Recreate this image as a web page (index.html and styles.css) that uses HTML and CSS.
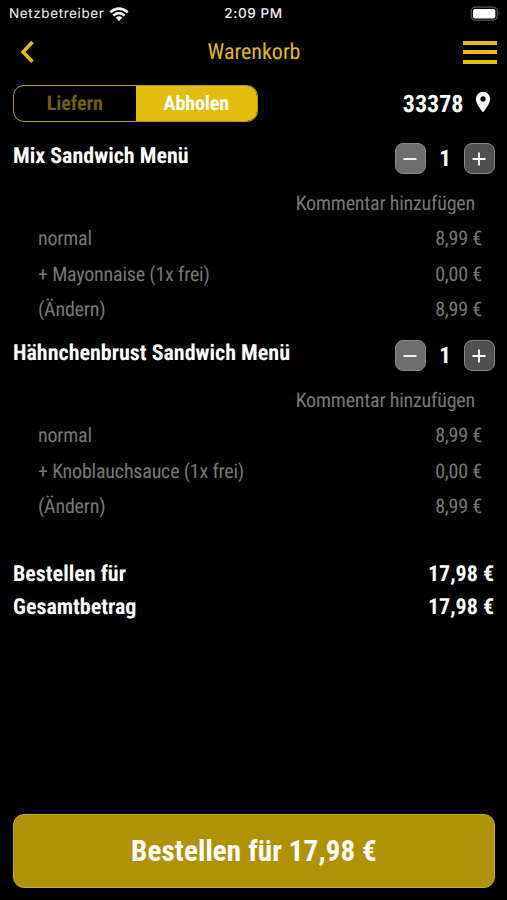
FILE: index.html
```
<!DOCTYPE html>
<html lang="de">
<head>
<meta charset="utf-8">
<title>Warenkorb</title>
<link rel="stylesheet" href="styles.css">
</head>
<body>
<header class="status">
  <div class="carrier"><span>Netzbetreiber</span>
    <svg width="20" height="15" viewBox="0 0 20 15"><g fill="none" stroke="#fff" stroke-width="2.6"><path d="M1.3 5.2Q10-2.1 18.7 5.2"/><path d="M4.3 8.5Q10 3.7 15.7 8.5"/></g><path fill="#fff" d="M6.7 10.6Q10 7.9 13.3 10.6L10 14.2z"/></svg>
  </div>
  <time class="clock">2:09 PM</time>
  <svg class="battery" width="31" height="16" viewBox="0 0 31 16"><rect x="1.2" y="1.2" width="26" height="13" rx="4" fill="none" stroke="#555" stroke-width="1.2"/><rect x="3" y="3" width="22.4" height="9.4" rx="2" fill="#fff"/><path d="M28.7 5.5q1.7 2.2 0 4.4z" fill="#555"/></svg>
</header>
<nav class="bar">
  <svg class="back" width="16" height="24" viewBox="0 0 16 24"><path d="M14.500 2L5 12l9.500 9.800" fill="none" stroke="#e2bd13" stroke-width="3.6"/></svg>
  <h1>Warenkorb</h1>
  <div class="menu"><i></i><i></i><i></i></div>
</nav>
<section class="mode">
  <div class="segments"><div class="seg">Liefern</div><div class="seg active">Abholen</div></div>
  <div class="place"><span>33378</span>
    <svg width="16" height="22" viewBox="0 0 16 22"><path fill="#fff" fill-rule="evenodd" d="M8 .8a7.2 7.2 0 0 0-7.2 7.2C.8 13.200 8 21.300 8 21.300s7.200-8.100 7.200-13.300A7.200 7.200 0 0 0 8 .8zm0 4.500a2.600 2.600 0 1 1 0 5.200 2.600 2.600 0 0 1 0-5.200z"/></svg>
  </div>
</section>
<main>
  <article>
    <div class="item"><h2>Mix Sandwich Menü</h2>
      <div class="stepper"><div class="step minus"><svg width="14" height="14"><path d="M.5 7h13"/></svg></div><b>1</b><div class="step"><svg width="14" height="14"><path d="M.5 7h13M7 .5v13"/></svg></div></div>
    </div>
    <div class="comment">Kommentar hinzufügen</div>
    <div class="line"><span>normal</span><span>8,99 €</span></div>
    <div class="line"><span>+ Mayonnaise (1x frei)</span><span>0,00 €</span></div>
    <div class="line"><span>(Ändern)</span><span>8,99 €</span></div>
  </article>
  <article>
    <div class="item"><h2>Hähnchenbrust Sandwich Menü</h2>
      <div class="stepper"><div class="step minus"><svg width="14" height="14"><path d="M.5 7h13"/></svg></div><b>1</b><div class="step"><svg width="14" height="14"><path d="M.5 7h13M7 .5v13"/></svg></div></div>
    </div>
    <div class="comment">Kommentar hinzufügen</div>
    <div class="line"><span>normal</span><span>8,99 €</span></div>
    <div class="line"><span>+ Knoblauchsauce (1x frei)</span><span>0,00 €</span></div>
    <div class="line"><span>(Ändern)</span><span>8,99 €</span></div>
  </article>
  <div class="totals">
    <div class="total"><span>Bestellen für</span><span>17,98 €</span></div>
    <div class="total"><span>Gesamtbetrag</span><span>17,98 €</span></div>
  </div>
</main>
<button class="order">Bestellen für 17,98 €</button>
</body>
</html>
```
FILE: styles.css
```
* { box-sizing: border-box; margin: 0; padding: 0; }
body { width: 507px; height: 900px; background: #000; color: #fff; overflow: hidden; display: flex; flex-direction: column; font-family: "Roboto Condensed", Roboto, sans-serif; font-stretch: 75%; letter-spacing: 0; white-space: nowrap; text-rendering: geometricPrecision; }
svg { display: block; flex: none; }
.status { height: 27px; display: grid; grid-template-columns: 1fr auto 1fr; align-items: center; padding: 0 6px 0 9px; font: 500 13.5px/27px Inter, sans-serif; letter-spacing: .6px; color: #f2f2f2; }
.carrier { display: flex; align-items: center; gap: 5px; font-weight: 400; }
.carrier span, .clock { padding-top: 1px; }
.clock { margin-right: 3px; }
.battery { justify-self: end; }
.bar { height: 50px; padding: 0 10px 0 18px; display: grid; grid-template-columns: 1fr auto 1fr; align-items: center; color: #e2bd13; }
.bar h1 { font-size: 22px; font-weight: 400; margin-right: 7px; }
.menu { justify-self: end; width: 34px; height: 23px; display: flex; flex-direction: column; justify-content: space-between; }
.menu i { height: 4px; background: #e2bd13; }
.mode { height: 53px; padding: 8px 16px 8px 13px; display: flex; justify-content: space-between; align-items: center; }
.segments { width: 245px; height: 37px; display: grid; grid-template-columns: 1fr 1fr; border: 1px solid #b39720; border-radius: 11px; overflow: hidden; }
.seg { text-align: center; font-size: 20px; line-height: 35px; font-weight: 700; letter-spacing: -.1px; color: #6f5e0c; }
.seg.active { background: #e2bd0d; color: #fff; }
.place { display: flex; align-items: center; gap: 11.5px; font-size: 24px; font-weight: 700; }
.place svg { margin-bottom: 3px; }
article { height: 197px; }
.item { height: 56px; padding: 0 12px 0 13px; display: flex; justify-content: space-between; }
.item h2 { font-size: 22px; line-height: 26px; font-weight: 700; margin-top: 14px; }
.stepper { width: 100px; height: 32px; margin-top: 12.5px; display: flex; justify-content: space-between; align-items: center; }
.stepper b { font-size: 23px; }
.step { width: 31px; height: 31px; border: 1px solid #888; border-radius: 8px; background: #505050; display: grid; place-items: center; }
.step.minus { background: #6e6e6e; }
.step svg { fill: none; stroke: #fff; stroke-width: 1.8; margin-right: 1px; }
.comment { height: 35px; padding-right: 32px; text-align: right; font-size: 20px; line-height: 35px; letter-spacing: -.2px; color: #777; }
.line { height: 35.5px; padding: 0 25px 0 38px; display: flex; justify-content: space-between; font-size: 20px; line-height: 35px; letter-spacing: -.2px; color: #777; }
.totals { padding: 34px 13px 0; }
.total { display: flex; justify-content: space-between; font-size: 22px; line-height: 33px; font-weight: 700; }
.order { margin: auto 12px 12px 13px; height: 74px; border: 1px solid #c6ad36; border-radius: 11px; background: #b09207; color: #fff; font: inherit; font-size: 29px; font-weight: 700; letter-spacing: .15px; }
```
